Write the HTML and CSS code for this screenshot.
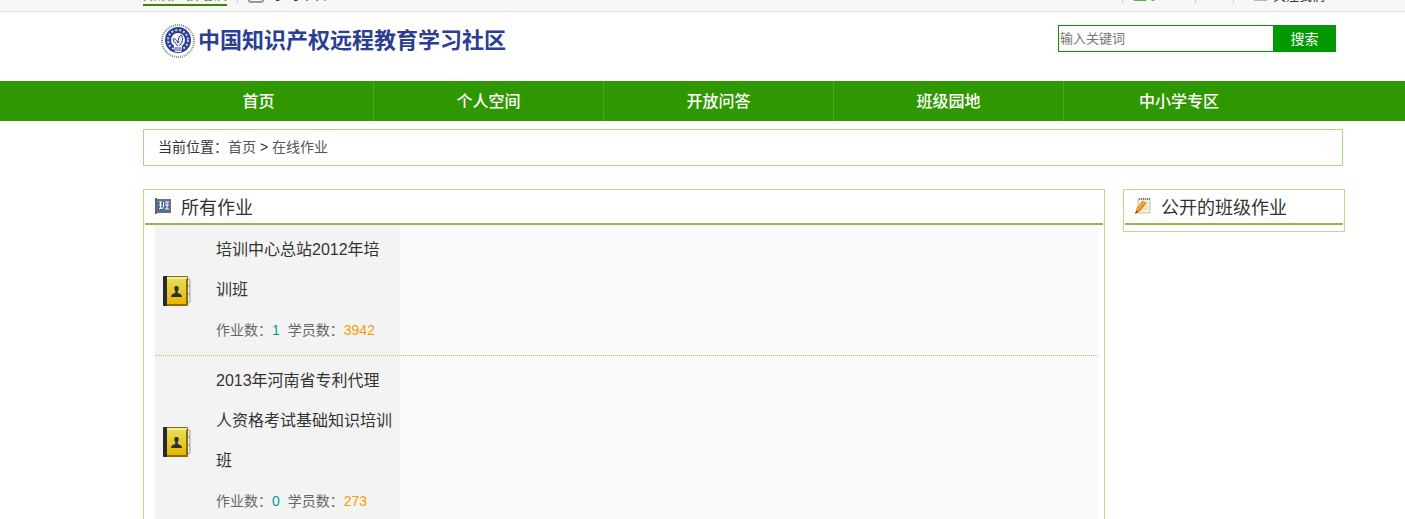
FILE: index.html
```html
<!DOCTYPE html>
<html lang="zh-CN">
<head>
  <meta charset="utf-8" />
  <title>在线作业</title>
  <meta name="viewport" content="width=device-width, initial-scale=1.0" />
  <link rel="stylesheet" href="styles.css">
</head>

<body>
  <div class="topbar">
    <div class="topbar-left">
      <a href="#" class="site-link">知识产权培训</a>
      <span class="sep"></span>
      <a href="#" class="mobile-link">
        <svg width="16" height="14" viewBox="0 0 16 14"><rect x="1" y="1" width="14" height="12" rx="2" fill="none" stroke="#999" stroke-width="2"/><path d="M4 0v9h12" fill="none" stroke="#999"/></svg>
        学习平台
      </a>
    </div>
    <div class="topbar-right">
      <span class="sep"></span>
      <a href="#" class="login-link">登录</a>
      <span class="sep"></span>
      <span class="sep"></span>
      <a href="#" class="follow-link"><span class="follow-icon"></span>关注我们</a>
    </div>
  </div>

  <div class="header">
    <a href="#" class="logo">
      <svg class="logo-mark" width="36" height="36" viewBox="0 0 36 36">
        <circle cx="18" cy="18" r="16" fill="none" stroke="#888" stroke-width="2" stroke-dasharray="1 1"/>
        <circle cx="18" cy="17" r="13" fill="#2a3f93"/>
        <circle cx="18" cy="17" r="10" fill="none" stroke="#cbd2ec" stroke-width="2" stroke-dasharray="2 2" />
        <circle cx="18" cy="17" r="7" fill="#fff"/>
        <path d="M18 24c-1-4-5-4-5-8 2-1 4 1 5 4 0-4 1-7 3-8 3 3 2 8-3 12z" fill="#dfe4f4" stroke="#2a3f93"/>
        <path d="M14 23h8l-1 6h-6z" fill="#fff"/>
        <path d="M15 25h6M15 27h6" stroke="#2a3f93"/>
      </svg>
      <span class="logo-text">中国知识产权远程教育学习社区</span>
    </a>
    <form class="search">
      <input type="text" placeholder="输入关键词" aria-label="输入关键词" />
      <button type="submit">搜索</button>
    </form>
  </div>

  <div class="nav">
    <a href="#">首页</a>
    <a href="#">个人空间</a>
    <a href="#">开放问答</a>
    <a href="#">班级园地</a>
    <a href="#">中小学专区</a>
  </div>

  <div class="crumb">当前位置：<a href="#">首页</a> &gt; <a href="#">在线作业</a></div>

  <div class="main">
    <div class="panel">
      <h2>
        <svg width="16" height="16" viewBox="0 0 16 16">
          <path d="M0 0h2v16H0z" fill="#5d6568"/>
          <rect x="2" y="1" width="14" height="14" fill="#6b7375"/>
          <rect x="3" y="3" width="11" height="10" fill="#446aa8"/>
          <path d="M4 4h3M4 7h3M4 11l3-1M5.500 4v7M8.500 4v4l-1 3M10 4h4M10 7h4M10 11h4M12 4v7" fill="none" stroke="#fff"/>
        </svg>
        所有作业
      </h2>
      <div class="list">
        <div class="row">
          <div class="item">
            <svg class="book" width="28" height="32" viewBox="0 0 28 32">
              <path d="M23 4h3q1 0 1 1v5q0 1-1 1 1 0 1 1v6q0 1-1 1 1 0 1 1v6q0 2-2 2h-2z" fill="#ececec" stroke="#999"/>
              <path d="M23 11h4M23 19h4" stroke="#999"/>
              <rect x="0" y="1" width="25" height="30" rx="1" fill="#8d6c0b"/>
              <path d="M4 2h20v2H4z" fill="#f5e9a0"/>
              <path class="book-front" d="M4 4h19v25H4z"/>
              <path d="M1 1h3v30H1q-1 0-1-1V2q0-1 1-1z" fill="#292929"/>
              <path d="M8 22q0-3 4-4 1-1 0-2-2-5 1.500-5t1.500 5q-1 1 0 2 4 1 4 4z" fill="#303030"/>
            </svg>
            <div class="info">
              <a href="#" class="name">培训中心总站2012年培训班</a>
              <p>作业数：<b class="works">1</b>学员数：<b class="students">3942</b></p>
            </div>
          </div>
        </div>
        <div class="row">
          <div class="item">
            <svg class="book" width="28" height="32" viewBox="0 0 28 32">
              <path d="M23 4h3q1 0 1 1v5q0 1-1 1 1 0 1 1v6q0 1-1 1 1 0 1 1v6q0 2-2 2h-2z" fill="#ececec" stroke="#999"/>
              <path d="M23 11h4M23 19h4" stroke="#999"/>
              <rect x="0" y="1" width="25" height="30" rx="1" fill="#8d6c0b"/>
              <path d="M4 2h20v2H4z" fill="#f5e9a0"/>
              <path class="book-front" d="M4 4h19v25H4z"/>
              <path d="M1 1h3v30H1q-1 0-1-1V2q0-1 1-1z" fill="#292929"/>
              <path d="M8 22q0-3 4-4 1-1 0-2-2-5 1.500-5t1.500 5q-1 1 0 2 4 1 4 4z" fill="#303030"/>
            </svg>
            <div class="info">
              <a href="#" class="name">2013年河南省专利代理人资格考试基础知识培训班</a>
              <p>作业数：<b class="works">0</b>学员数：<b class="students">273</b></p>
            </div>
          </div>
        </div>
      </div>
    </div>

    <div class="panel side">
      <h2>
        <svg width="16" height="16" viewBox="0 0 16 16">
          <path d="M3 1h12v14H3z" fill="#f8f1d8" stroke="#c9bd98"/>
          <path d="M4 1h11" stroke="#877b60" stroke-width="2" stroke-dasharray="1 1"/>
          <path d="M6 5h7M6 8h7M6 11h7" stroke="#d9cda9"/>
          <path d="M1 15l1-5 6-7 3 2-6 8z" fill="#f28b20" stroke="#c76a12" stroke-width=".5"/>
          <path d="M3 11l6-7" stroke="#ffc26b"/>
          <path d="M0 16l1-3 2 1z" fill="#333"/>
        </svg>
        公开的班级作业
      </h2>
    </div>
  </div>

  <!-- shared gradient for the book covers -->
  <svg class="defs" width="0" height="0">
    <linearGradient id="cover" x1="0" y1="0" x2="0" y2="1">
      <stop offset="0" stop-color="#e5df56"/>
      <stop offset="1" stop-color="#e8b400"/>
    </linearGradient>
  </svg>
</body>
</html>
```
FILE: styles.css
```css
body {
  margin: 0;
  font-family: "Liberation Sans", "Noto Sans CJK SC", sans-serif;
  font-size: 14px;
  color: #333;
  background-color: #fff;
  scrollbar-width: none;
}

body::-webkit-scrollbar {
  display: none;
}

a {
  color: inherit;
  text-decoration: none;
}

/* top bar */
.topbar {
  display: flex;
  justify-content: space-between;
  align-items: flex-end;
  height: 11px;
  padding: 0 80px 0 143px;
  overflow: hidden;
  background-color: #f7f7f7;
  border-bottom: 1px solid #e2e2e2;
}

.topbar-left,
.topbar-right {
  display: flex;
  align-items: flex-end;
  height: 30px;
  line-height: 20px;
}

.site-link {
  margin-bottom: 5px;
  color: #418200;
  font-weight: bold;
  border-bottom: 2px solid #418200;
}

.sep {
  width: 1px;
  height: 20px;
  margin: 0 10px 8px;
  background-color: #ccc;
}

.mobile-link {
  display: flex;
  align-items: flex-end;
  gap: 8px;
  margin-bottom: 7px;
}

.mobile-link svg {
  margin-bottom: 1px;
}

.login-link {
  width: 52px;
  margin-bottom: 7px;
  color: #5cb82c;
}

.topbar-right .sep:nth-of-type(3) {
  margin-left: 27px;
}

.follow-link {
  display: flex;
  align-items: flex-end;
  gap: 6px;
  margin: 0 0 5px 10px;
  font-size: 13px;
}

.follow-icon {
  width: 13px;
  height: 10px;
  margin-bottom: 5px;
  background-color: #b5b5b5;
}

/* logo and search */
.header {
  display: flex;
  justify-content: space-between;
  align-items: flex-start;
  height: 58px;
  padding: 11px 69px 0 160px;
}

.logo {
  display: flex;
  align-items: center;
  gap: 2px;
  color: #2a3f93;
  font-size: 22px;
  font-weight: bold;
  line-height: 36px;
  white-space: nowrap;
}

.search {
  display: flex;
  margin-top: 2px;
}

.search input {
  box-sizing: border-box;
  width: 215px;
  height: 27px;
  padding: 0 1px;
  border: 1px solid #090;
  border-right: 0;
  font-family: inherit;
  font-size: 13px;
}

.search input::placeholder {
  color: #757575;
}

.search button {
  width: 63px;
  height: 27px;
  padding: 0 0 2px;
  border: 0;
  color: #fff;
  background-color: #090;
  font-family: inherit;
  font-size: 14px;
  cursor: pointer;
}

/* navigation */
.nav {
  display: grid;
  grid-template-columns: repeat(5, 1fr);
  padding: 0 111px 0 144px;
  background-color: #2f9800;
}

.nav a {
  height: 40px;
  border-right: 1px solid #43ab17;
  color: #fff;
  font-size: 16px;
  font-weight: 500;
  line-height: 42px;
  text-align: center;
}

.nav a:last-child {
  border-right: 0;
}

.crumb {
  margin: 8px 62px 0 143px;
  padding: 0 14px;
  border: 1px solid #a7d98a;
  line-height: 35px;
}

.crumb a {
  color: #555;
}

/* panels */
.main {
  display: grid;
  grid-template-columns: 1fr 222px;
  align-items: start;
  gap: 18px;
  margin: 23px 60px 0 143px;
}

.panel {
  padding: 0 1px 6px;
  border: 1px solid #c5d58b;
}

.panel h2 {
  display: flex;
  align-items: center;
  gap: 10px;
  height: 31px;
  margin: 0;
  padding: 0 0 2px 10px;
  border-bottom: 2px solid #8dbb4c;
  font-size: 18px;
  font-weight: normal;
}

.list {
  margin: 0 5px 0 10px;
  background-color: #fafafa;
}

.row {
  border-bottom: 1px dotted #9dcc62;
}

.item {
  display: flex;
  align-items: center;
  box-sizing: border-box;
  width: 245px;
  padding: 5px 0 4px 8px;
  background-color: #f3f3f3;
}

.book {
  flex-shrink: 0;
}

.book-front {
  fill: url(#cover);
}

.info {
  width: 177px;
  margin-left: 25px;
}

.name {
  display: block;
  font-size: 16px;
  line-height: 40px;
}

.info p {
  margin: 0;
  color: #666;
  line-height: 41px;
}

.info b {
  font-weight: normal;
}

.works {
  margin-right: 8px;
  color: #099;
}

.students {
  color: #f90;
}

.defs {
  position: absolute;
}
```
